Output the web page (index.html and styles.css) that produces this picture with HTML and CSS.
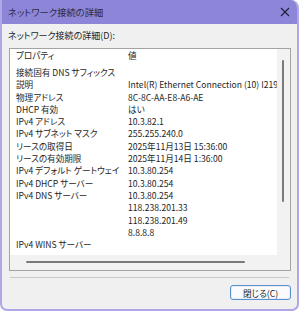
FILE: index.html
```html
<!DOCTYPE html>
<html lang="ja">
<head>
    <meta charset="UTF-8">
    <title>ネットワーク接続の詳細</title>
    <link rel="stylesheet" href="styles.css">
</head>
<body>
    <div class="window">
        <div class="titlebar">
            <span class="title">ネットワーク接続の詳細</span>
            <svg class="close" width="10" height="10" viewBox="0 0 10 10">
                <path d="M1 1 L9 9 M9 1 L1 9" stroke="#1f1d3d" stroke-width="1.1" fill="none"/>
            </svg>
        </div>

        <div class="content">
            <div class="group-label">ネットワーク接続の詳細(D):</div>

            <div class="list">
                <div class="list-main">
                    <div class="row head"><span>プロパティ</span><span>値</span></div>
                    <div class="rows">
                        <div class="row"><span>接続固有 DNS サフィックス</span><span></span></div>
                        <div class="row"><span>説明</span><span>Intel(R) Ethernet Connection (10) I219-V</span></div>
                        <div class="row"><span>物理アドレス</span><span>8C-8C-AA-E8-A6-AE</span></div>
                        <div class="row"><span>DHCP 有効</span><span>はい</span></div>
                        <div class="row"><span>IPv4 アドレス</span><span>10.3.82.1</span></div>
                        <div class="row"><span>IPv4 サブネット マスク</span><span>255.255.240.0</span></div>
                        <div class="row"><span>リースの取得日</span><span>2025年11月13日 15:36:00</span></div>
                        <div class="row"><span>リースの有効期限</span><span>2025年11月14日 1:36:00</span></div>
                        <div class="row"><span>IPv4 デフォルト ゲートウェイ</span><span>10.3.80.254</span></div>
                        <div class="row"><span>IPv4 DHCP サーバー</span><span>10.3.80.254</span></div>
                        <div class="row"><span>IPv4 DNS サーバー</span><span>10.3.80.254</span></div>
                        <div class="row"><span></span><span>118.238.201.33</span></div>
                        <div class="row"><span></span><span>118.238.201.49</span></div>
                        <div class="row"><span></span><span>8.8.8.8</span></div>
                        <div class="row"><span>IPv4 WINS サーバー</span><span></span></div>
                    </div>
                </div>
                <div class="vscroll"><div class="vthumb"></div></div>
                <div class="hscroll"><div class="hthumb"></div></div>
                <div class="corner"></div>
            </div>

            <div class="separator"></div>

            <div class="actions">
                <button class="button">閉じる(C)</button>
            </div>
        </div>
    </div>
</body>
</html>
```

FILE: styles.css
```css
* {
    padding: 0;
    margin: 0;
    box-sizing: border-box;
}

body {
    font-family: "Noto Sans CJK JP", "Noto Sans", sans-serif;
    font-size: 8.6px;
    font-feature-settings: "palt";
    color: #1e1e1e;
    background-color: #ffffff;
    width: 300px;
    height: 312px;
    overflow: hidden;
}

.window {
    width: 299px;
    height: 311px;
    background-color: #f0f0f0;
    border: 2px solid #aea8e6;
    border-top: none;
    border-radius: 0 8px 7px 7px;
    overflow: hidden;
    display: flex;
    flex-direction: column;
}

.titlebar {
    height: 24px;
    margin: 0 -2px;
    padding: 0 9px 0 8px;
    background-color: #8d86d8;
    display: flex;
    align-items: center;
    justify-content: space-between;
}

.title {
    font-size: 9.3px;
    color: #2b2944;
}

.close {
    display: block;
}

.content {
    flex: 1;
    padding: 6px 6px 0 6px;
    display: flex;
    flex-direction: column;
}

.group-label {
    font-size: 9px;
    line-height: 12px;
    height: 12px;
}

.list {
    margin: 6px 0 0 1px;
    width: 282px;
    height: 223px;
    border: 1px solid #a3a3a3;
    background-color: #ffffff;
    display: grid;
    grid-template-columns: 267px 13px;
    grid-template-rows: 206px 15px;
    overflow: hidden;
}

.list-main {
    overflow: hidden;
    padding-left: 6px;
}

.row {
    display: grid;
    grid-template-columns: 112px max-content;
    white-space: nowrap;
    height: 12.3px;
    line-height: 12.3px;
}

.row.head {
    height: 13px;
    line-height: 13px;
}

.rows {
    margin-top: 4px;
}

.vscroll {
    background-color: #f2f2f2;
    padding: 11px 0 0 5px;
}

.vthumb {
    width: 2px;
    height: 142px;
    background-color: #7a7a7a;
    border-radius: 1px;
}

.hscroll {
    background-color: #f2f2f2;
    padding: 6px 0 0 16px;
}

.hthumb {
    width: 219px;
    height: 2px;
    background-color: #7a7a7a;
    border-radius: 1px;
}

.corner {
    background-color: #f2f2f2;
}

.separator {
    margin: 6px 2px 0 2px;
    height: 1px;
    background-color: #c9c9c9;
}

.actions {
    display: flex;
    justify-content: flex-end;
    padding-top: 7px;
}

.button {
    width: 61px;
    height: 15px;
    font-family: inherit;
    font-size: 8.6px;
    font-feature-settings: "palt";
    color: #1e1e1e;
    background-color: #fbfbfb;
    border: 1px solid #5a8fcf;
    border-radius: 3px;
    box-shadow: inset 0 0 0 1px #e6eef8;
    line-height: 12px;
}
```
